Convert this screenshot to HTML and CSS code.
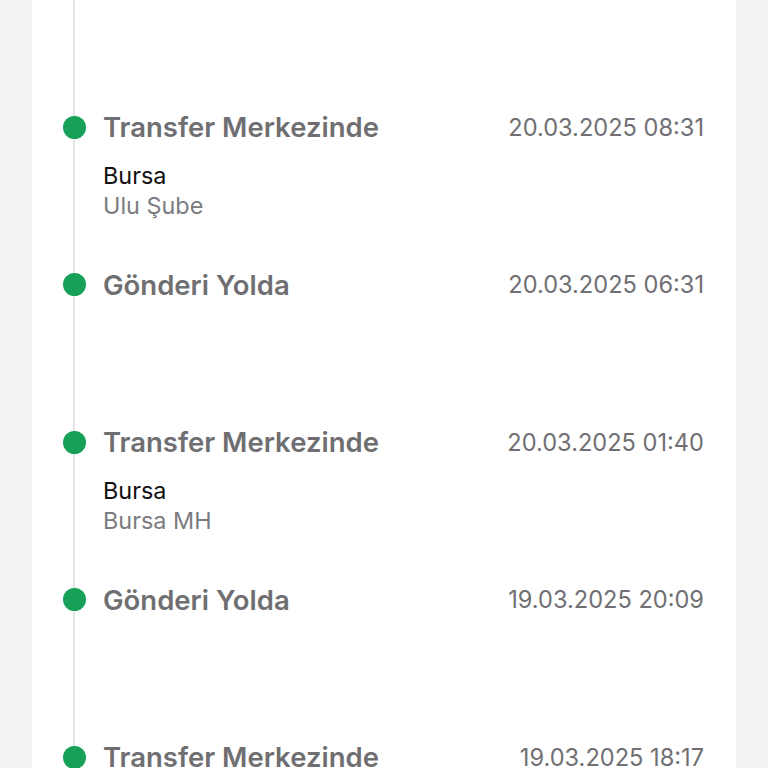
FILE: index.html
```html
<!DOCTYPE html>
<html lang="tr">
<head>
  <meta charset="UTF-8">
  <meta name="viewport" content="width=device-width, initial-scale=1.0">
  <title>Gönderi Hareketleri</title>
  <link rel="stylesheet" href="styles.css">
</head>
<body>
  <div class="card">
    <ul class="timeline">
      <li class="event">
        <span class="dot"></span>
        <div class="event-body">
          <div class="event-head">
            <span class="event-title">Transfer Merkezinde</span>
            <span class="event-date">20.03.2025 08:31</span>
          </div>
          <p class="event-city">Bursa</p>
          <p class="event-branch">Ulu Şube</p>
        </div>
      </li>
      <li class="event">
        <span class="dot"></span>
        <div class="event-body">
          <div class="event-head">
            <span class="event-title">Gönderi Yolda</span>
            <span class="event-date">20.03.2025 06:31</span>
          </div>
        </div>
      </li>
      <li class="event">
        <span class="dot"></span>
        <div class="event-body">
          <div class="event-head">
            <span class="event-title">Transfer Merkezinde</span>
            <span class="event-date">20.03.2025 01:40</span>
          </div>
          <p class="event-city">Bursa</p>
          <p class="event-branch">Bursa MH</p>
        </div>
      </li>
      <li class="event">
        <span class="dot"></span>
        <div class="event-body">
          <div class="event-head">
            <span class="event-title">Gönderi Yolda</span>
            <span class="event-date">19.03.2025 20:09</span>
          </div>
        </div>
      </li>
      <li class="event">
        <span class="dot"></span>
        <div class="event-body">
          <div class="event-head">
            <span class="event-title">Transfer Merkezinde</span>
            <span class="event-date">19.03.2025 18:17</span>
          </div>
          <p class="event-city">Bursa</p>
          <p class="event-branch">Bursa MH</p>
        </div>
      </li>
    </ul>
  </div>
</body>
</html>
```

FILE: styles.css
```css
body {
  font-family: Inter, "Noto Sans", sans-serif;
  background-color: #f2f3f5;
  margin: 0;
  height: 768px;
  overflow: hidden;
}
.card {
  position: relative;
  background: white;
  margin: 0 32px;
  padding: 110px 32px 0 31px;
  min-height: 900px;
}
.card::before {
  content: "";
  position: absolute;
  left: 41px;
  top: 0;
  bottom: 0;
  width: 2px;
  background: #e4e5e8;
}
.timeline {
  list-style: none;
  margin: 0;
  padding: 0;
}
.event {
  display: flex;
  gap: 17px;
  height: 157.5px;
}
.dot {
  position: relative;
  flex: none;
  width: 23px;
  height: 23px;
  margin-top: 5.5px;
  border-radius: 50%;
  background: #16a058;
}
.event-body {
  flex: 1;
}
.event-head {
  display: flex;
  justify-content: space-between;
  align-items: center;
  height: 34px;
}
.event-title {
  font-size: 27.5px;
  font-weight: 600;
  color: #6f6f72;
}
.event-date {
  font-size: 23.6px;
  color: #707073;
}
.event-city,
.event-branch {
  margin: 0;
  font-size: 23.4px;
  line-height: 30px;
}
.event-city {
  margin-top: 17px;
  color: #111;
}
.event-branch {
  color: #7c7c80;
}
```
